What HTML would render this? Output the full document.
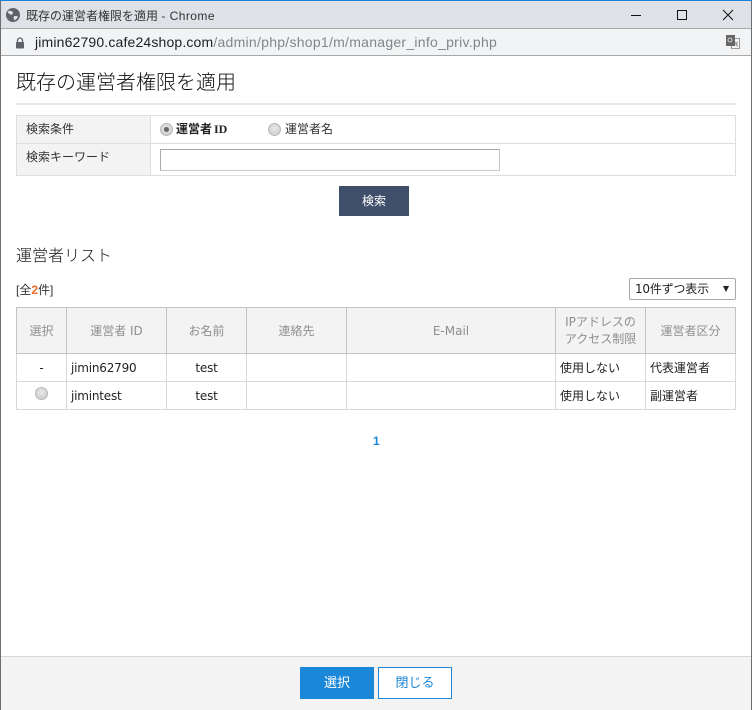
<!DOCTYPE html>
<html lang="ja"><head><meta charset="utf-8"><style>
html,body{margin:0;padding:0;background:#fff}
body{width:752px;height:710px;position:relative;overflow:hidden;font-family:"DejaVu Sans","Noto Sans CJK JP",sans-serif;font-size:12px;color:#222}
.a{position:absolute;white-space:nowrap}
.c{text-align:center}
table{border-collapse:collapse;position:absolute;table-layout:fixed}
td,th{padding:0;font-size:12px;font-weight:normal}
td{letter-spacing:-.2px}
.jp{font-family:"Noto Sans CJK JP","Liberation Sans",sans-serif}
.radio{position:absolute;width:13px;height:13px;border-radius:50%;background:radial-gradient(circle at 50% 40%,#e8e8e8,#c8c8c8);border:1px solid #b8b8b8;box-sizing:border-box}
.radio.on::after{content:"";position:absolute;left:3px;top:3px;width:5px;height:5px;border-radius:50%;background:#666}
</style></head><body>
<div class="a" style="left:0;top:0;width:752px;height:1px;background:#1883d7"></div>
<div class="a" style="left:0;top:1px;width:752px;height:27px;background:#dee1e6"></div>
<div class="a" style="left:0;top:28px;width:752px;height:1px;background:#a9a9a9"></div>
<div class="a" style="left:0;top:29px;width:752px;height:26px;background:#f1f3f4"></div>
<div class="a" style="left:0;top:55px;width:752px;height:1px;background:#a9a9a9"></div>
<div class="a" style="left:0;top:1px;width:1px;height:709px;background:#6e6e6e"></div>
<div class="a" style="left:751px;top:1px;width:1px;height:709px;background:#6e6e6e"></div>
<svg class="a" style="left:6px;top:8px" width="14" height="14" viewBox="0 0 14 14"><circle cx="7" cy="7" r="7" fill="#5f6368"/><path d="M3 2.500l3.500 1 .5 2-2 1.500-3.500-2.500zM8 8l3.500 0 0 2-3 2.500-1-2.500z" fill="#dee1e6"/></svg>
<div class="a" style="left:26px;top:8px;font-size:12px;line-height:16px;color:#333;font-family:'Liberation Sans','Noto Sans CJK JP',sans-serif">既存の運営者権限を適用 <span style="letter-spacing:.45px">- Chrome</span></div>
<svg class="a" style="left:620px;top:8px" width="125" height="15" viewBox="0 0 125 15"><path d="M11 7.500h10" stroke="#111" fill="none"/><rect x="57.500" y="2.500" width="9" height="9" stroke="#111" fill="none"/><path d="M103 2l10 10M113 2l-10 10" stroke="#111" fill="none"/></svg>
<svg class="a" style="left:15px;top:37px" width="10" height="12" viewBox="0 0 10 12"><path d="M2.500 5V3.500a2.500 2.500 0 0 1 5 0V5" stroke="#5f6368" stroke-width="1.300" fill="none"/><rect x="1" y="5" width="8" height="6.500" rx=".8" fill="#5f6368"/></svg>
<div class="a" style="left:35px;top:34px;font-size:14px;line-height:17px;color:#80868b;font-family:'Liberation Sans',sans-serif"><span style="color:#202124;letter-spacing:.16px">jimin62790.cafe24shop.com</span><span style="letter-spacing:.27px">/admin/php/shop1/m/manager_info_priv.php</span></div>
<svg class="a" style="left:725px;top:34px" width="16" height="16" viewBox="0 0 16 16"><rect x="6.500" y="4.500" width="8" height="10" fill="#f1f3f4" stroke="#999"/><rect x="1" y="1" width="9" height="11" fill="#666"/><circle cx="5" cy="6" r="2" fill="none" stroke="#ccc"/><path d="M10.500 8l2 4.500M12.500 8l-2 3" stroke="#888" fill="none"/></svg>

<div class="a jp" style="left:16px;top:67px;font-size:20px;line-height:28px;color:#111;font-weight:300">既存の運営者権限を適用</div>
<div class="a" style="left:16px;top:103px;width:720px;height:2px;background:#e8e8e8"></div>

<table style="left:16px;top:115px;width:719px;height:61px" border="0">
<colgroup><col style="width:134px"><col style="width:585px"></colgroup>
<tr style="height:28px"><td style="border:1px solid #dedede;background:#f3f3f3"></td><td style="border:1px solid #dedede"></td></tr>
<tr style="height:32px"><td style="border:1px solid #dedede;background:#f3f3f3"></td><td style="border:1px solid #dedede"></td></tr>
</table>
<div class="a jp" style="left:26px;top:121px;line-height:16px;color:#333">検索条件</div>
<div class="a jp" style="left:26px;top:149px;line-height:16px;color:#333">検索キーワード</div>
<div class="radio on" style="left:160px;top:123px"></div>
<div class="a" style="left:176px;top:121px;line-height:16px;font-weight:bold;color:#222"><span class="jp">運営者</span><span style="font-family:'Liberation Serif',serif;font-size:12px;margin-left:2px">ID</span></div>
<div class="radio" style="left:268px;top:123px"></div>
<div class="a jp" style="left:285px;top:121px;line-height:16px;color:#333">運営者名</div>
<div class="a" style="left:160px;top:149px;width:340px;height:22px;box-sizing:border-box;border:1px solid #c8c8c8;border-top-color:#aaa;border-left-color:#aaa;background:#fff"></div>
<div class="a c jp" style="left:339px;top:186px;width:70px;height:30px;line-height:30px;background:#3f4f69;color:#fff">検索</div>

<div class="a jp" style="left:16px;top:243px;font-size:16px;line-height:22px;color:#111;font-weight:300">運営者リスト</div>
<div class="a" style="left:16px;top:282px;line-height:16px;color:#333;font-size:12px;font-family:'Liberation Sans','Noto Sans CJK JP',sans-serif">[全<b style="color:#f26a21">2</b>件]</div>
<div class="a" style="left:629px;top:278px;width:107px;height:22px;box-sizing:border-box;border:1px solid #a8a8a8;border-radius:2px;background:#fff;line-height:20px;padding-left:5px;color:#222;letter-spacing:-.2px">10件ずつ表示</div>
<div class="a" style="left:723px;top:286px;width:0;height:0;border-left:3px solid transparent;border-right:3px solid transparent;border-top:6px solid #222"></div>

<table style="left:16px;top:307px;width:719px;height:103px;color:#222">
<colgroup><col style="width:50px"><col style="width:100px"><col style="width:80px"><col style="width:100px"><col style="width:209px"><col style="width:90px"><col style="width:90px"></colgroup>
<tr style="height:46px;background:#f3f3f3;color:#8f8f8f;text-align:center">
<th style="border:1px solid #c0c4c8">選択</th><th style="border:1px solid #c0c4c8">運営者 ID</th><th style="border:1px solid #c0c4c8">お名前</th><th style="border:1px solid #c0c4c8">連絡先</th><th style="border:1px solid #c0c4c8">E-Mail</th><th style="border:1px solid #c0c4c8;line-height:17px">IPアドレスの<br>アクセス制限</th><th style="border:1px solid #c0c4c8">運営者区分</th></tr>
<tr style="height:28px">
<td style="border:1px solid #d8d8d8;border-top:1px solid #c0c4c8;text-align:center">-</td><td style="border:1px solid #d8d8d8;border-top:1px solid #c0c4c8;padding-left:4px">jimin62790</td><td style="border:1px solid #d8d8d8;border-top:1px solid #c0c4c8;text-align:center">test</td><td style="border:1px solid #d8d8d8;border-top:1px solid #c0c4c8"></td><td style="border:1px solid #d8d8d8;border-top:1px solid #c0c4c8"></td><td style="border:1px solid #d8d8d8;border-top:1px solid #c0c4c8;padding-left:4px;letter-spacing:0">使用しない</td><td style="border:1px solid #d8d8d8;border-top:1px solid #c0c4c8;padding-left:4px;letter-spacing:0">代表運営者</td></tr>
<tr style="height:28px">
<td style="border:1px solid #d8d8d8"></td><td style="border:1px solid #d8d8d8;padding-left:4px">jimintest</td><td style="border:1px solid #d8d8d8;text-align:center">test</td><td style="border:1px solid #d8d8d8"></td><td style="border:1px solid #d8d8d8"></td><td style="border:1px solid #d8d8d8;padding-left:4px;letter-spacing:0">使用しない</td><td style="border:1px solid #d8d8d8;padding-left:4px;letter-spacing:0">副運営者</td></tr>
</table>
<div class="radio" style="left:35px;top:387px"></div>
<div class="a" style="left:373px;top:433px;line-height:16px;font-weight:bold;color:#1c86d6;font-family:'Liberation Sans',sans-serif">1</div>

<div class="a" style="left:1px;top:656px;width:750px;height:54px;background:#f3f3f3;border-top:1px solid #d8d8d8;box-sizing:border-box"></div>
<div class="a c jp" style="left:300px;top:667px;width:74px;height:32px;line-height:30px;background:#1b87d8;color:#fff;font-size:13px">選択</div>
<div class="a c jp" style="left:378px;top:667px;width:74px;height:32px;line-height:28px;box-sizing:border-box;border:1px solid #1b87d8;background:#fff;color:#1b87d8;font-size:13px">閉じる</div>
</body></html>
